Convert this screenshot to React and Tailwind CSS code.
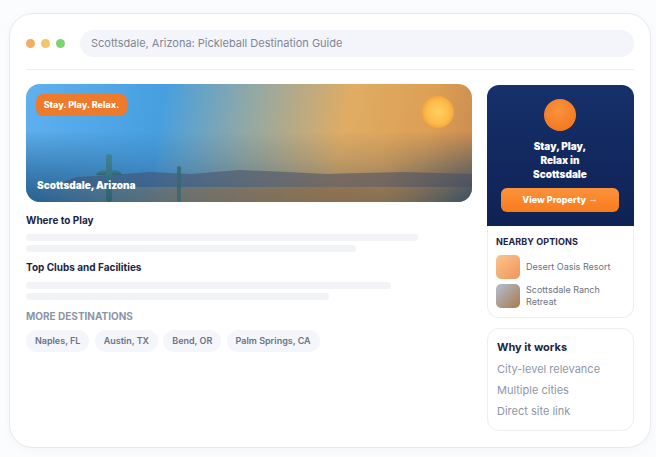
const font = { fontFamily: "Inter, 'Liberation Sans', sans-serif" };

function HeroArt() {
  return (
    <svg className="absolute inset-0 w-full h-full" viewBox="0 0 446 118" preserveAspectRatio="none">
      <defs>
        <linearGradient id="haze" x1="0" y1="0" x2="0" y2="1">
          <stop offset="0" stopColor="#1a3a66" stopOpacity="0" />
          <stop offset="0.4" stopColor="#1a3a66" stopOpacity="0" />
          <stop offset="0.62" stopColor="#1f4068" stopOpacity="0.14" />
          <stop offset="1" stopColor="#14375c" stopOpacity="0.45" />
        </linearGradient>
        <linearGradient id="edges" x1="0" y1="0" x2="1" y2="0">
          <stop offset="0" stopColor="#14507f" stopOpacity="0.55" />
          <stop offset="0.3" stopColor="#14507f" stopOpacity="0" />
          <stop offset="0.8" stopColor="#1d4a6e" stopOpacity="0" />
          <stop offset="1" stopColor="#1d4a6e" stopOpacity="0.7" />
        </linearGradient>
        <linearGradient id="fade" x1="0" y1="0" x2="0" y2="1">
          <stop offset="0.4" stopColor="#000" />
          <stop offset="1" stopColor="#fff" />
        </linearGradient>
        <mask id="bottomFade">
          <rect x="0" y="0" width="446" height="118" fill="url(#fade)" />
        </mask>
        <linearGradient id="hill" x1="0" y1="0" x2="0" y2="1">
          <stop offset="0" stopColor="#474c66" stopOpacity="0.55" />
          <stop offset="1" stopColor="#424a60" stopOpacity="0.45" />
        </linearGradient>
        <linearGradient id="ground" x1="0" y1="0" x2="1" y2="0">
          <stop offset="0" stopColor="#8a6a48" stopOpacity="0" />
          <stop offset="0.35" stopColor="#8a6a48" stopOpacity="0.55" />
          <stop offset="0.7" stopColor="#8a6a48" stopOpacity="0.65" />
          <stop offset="1" stopColor="#8a6a48" stopOpacity="0" />
        </linearGradient>
        <linearGradient id="trunk" x1="0" y1="0" x2="0" y2="1">
          <stop offset="0" stopColor="#3f7f8c" stopOpacity="0.85" />
          <stop offset="1" stopColor="#2c5f6a" stopOpacity="0.9" />
        </linearGradient>
        <radialGradient id="sun" cx="0.5" cy="0.5" r="0.5">
          <stop offset="0" stopColor="#ffd064" />
          <stop offset="0.72" stopColor="#fcbc48" />
          <stop offset="1" stopColor="#f6a63c" />
        </radialGradient>
      </defs>
      <rect x="0" y="0" width="446" height="118" fill="url(#haze)" />
      <rect x="0" y="0" width="446" height="118" fill="url(#edges)" mask="url(#bottomFade)" />
      <path d="M24 103 L50 93 L85 91 L123 88 L165 90 L213 86 L262 88 L300 90 L335 89 L379 88 L446 90 L446 103 Z" fill="url(#hill)" />
      <rect x="0" y="103" width="446" height="15" fill="url(#ground)" />
      <circle cx="412" cy="28" r="16" fill="url(#sun)" />
      <rect x="80" y="70" width="6" height="48" rx="3" fill="url(#trunk)" />
      <path d="M70 91 C72 86 77 85 80 87 L80 91 Z" fill="url(#trunk)" />
      <path d="M96 91 C94 86 89 85 86 87 L86 91 Z" fill="url(#trunk)" />
      <rect x="151" y="82" width="4" height="36" rx="2" fill="#3a6670" fillOpacity="0.85" />
    </svg>
  );
}

export default function App() {
  return (
    <div className="w-[656px] h-[457px] bg-[#fbfcfd] pt-[13px] pl-[9px] overflow-hidden" style={font}>
      <div className="w-[642px] h-[435px] bg-white border border-[#e8eaef] rounded-[24px] px-4 pt-4 shadow-[0_2px_10px_rgba(20,30,60,0.03)]">
        {/* Top bar */}
        <div className="flex items-center gap-[9px] h-[27px]">
          <div className="flex gap-[6px] w-[45px]">
            <span className="w-[9px] h-[9px] rounded-full bg-[#f4ad63]" />
            <span className="w-[9px] h-[9px] rounded-full bg-[#f3c566]" />
            <span className="w-[9px] h-[9px] rounded-full bg-[#7bd56f]" />
          </div>
          <div className="flex-1 h-[27px] rounded-full bg-[#f3f5fb] flex items-center pl-[11px] text-[11px] text-[#7f8695]">
            Scottsdale, Arizona: Pickleball Destination Guide
          </div>
        </div>
        <div className="h-px bg-[#edeff3] mt-3" />

        <div className="flex gap-[15px] mt-[14px]">
          {/* Left column */}
          <div className="w-[446px]">
            <div className="relative h-[118px] rounded-[14px] overflow-hidden bg-[linear-gradient(100deg,#5fb0ee_0%,#479fe0_30%,#8fa8a8_48%,#e0ac63_70%,#dc9f55_88%,#c98a4e_100%)]">
              <HeroArt />
              <div className="absolute left-[10px] top-[10px] h-[22px] w-[91px] rounded-[7px] bg-[#ee7a2c] flex items-center justify-center text-[9px] font-extrabold text-white">
                Stay. Play. Relax.
              </div>
              <div className="absolute left-[11px] bottom-[10px] text-[10px] leading-[14px] font-black text-white">
                Scottsdale, Arizona
              </div>
            </div>

            <h3 className="mt-[12px] text-[10px] leading-[13px] font-bold text-[#1c2544]">Where to Play</h3>
            <div className="mt-[7px] h-[7px] w-[392px] rounded-full bg-[#f1f3f7]" />
            <div className="mt-1 h-[7px] w-[330px] rounded-full bg-[#f1f3f7]" />

            <h3 className="mt-[9px] text-[10px] leading-[13px] font-bold text-[#1c2544]">Top Clubs and Facilities</h3>
            <div className="mt-2 h-[7px] w-[365px] rounded-full bg-[#f1f3f7]" />
            <div className="mt-1 h-[7px] w-[303px] rounded-full bg-[#f1f3f7]" />

            <div className="mt-[10px] text-[10px] leading-[13px] font-bold text-[#8d94a8]">MORE DESTINATIONS</div>
            <div className="flex gap-[5.4px] mt-[7px]">
              {["Naples, FL", "Austin, TX", "Bend, OR", "Palm Springs, CA"].map((c) => (
                <span key={c} className="h-[22px] px-[8.9px] rounded-full bg-[#f4f6fb] flex items-center text-[9px] font-semibold text-[#6b7385]">
                  {c}
                </span>
              ))}
            </div>
          </div>

          {/* Right column */}
          <div className="w-[147px] mt-px">
            <div className="h-[233px] flex flex-col">
              <div className="h-[141px] rounded-t-[12px] bg-[linear-gradient(180deg,#16306a,#0f2254)] flex flex-col items-center pt-[14px] pr-px">
                <div className="w-8 h-8 rounded-full bg-[radial-gradient(circle_at_45%_35%,#fb923c,#ef7118)]" />
                <div className="mt-2 text-center text-[10px] leading-[14px] font-black text-white w-[70px]">
                  Stay, Play, Relax in Scottsdale
                </div>
                <div className="mt-[7px] w-[118px] h-6 rounded-[6px] bg-[linear-gradient(180deg,#fb923c,#f97c1c)] flex items-center justify-center text-[9px] font-extrabold text-white">
                  View Property <span className="ml-[2.5px]" style={{ fontFamily: "'Liberation Sans', sans-serif" }}>→</span>
                </div>
              </div>
              <div className="flex-1 border-x border-b border-[#eceef2] rounded-b-[12px] px-2 pt-[10px]">
                <div className="text-[9px] leading-[11px] font-bold text-[#1c2544] tracking-[0.01em]">NEARBY OPTIONS</div>
                <div className="flex items-center gap-[6px] mt-2">
                  <div className="w-6 h-6 rounded-[5px] bg-[linear-gradient(135deg,#fbc48e,#ef955a)]" />
                  <span className="text-[9px] leading-3 text-[#6b7280]">Desert Oasis Resort</span>
                </div>
                <div className="flex items-center gap-[6px] mt-[5px]">
                  <div className="w-6 h-6 rounded-[5px] bg-[linear-gradient(135deg,#b3bfd4,#a97a4a)]" />
                  <span className="text-[9px] leading-3 text-[#6b7280] w-[90px]">Scottsdale Ranch Retreat</span>
                </div>
              </div>
            </div>

            <div className="mt-[10px] h-[103px] rounded-[12px] border border-[#eceef2] bg-white px-[9px] pt-[11px]">
              <div className="text-[11px] leading-[15px] font-bold text-[#1c2544]">Why it works</div>
              <div className="mt-1 text-[11px] leading-[21px] text-[#8f96a8]">City-level relevance</div>
              <div className="text-[11px] leading-[21px] text-[#8f96a8]">Multiple cities</div>
              <div className="text-[11px] leading-[21px] text-[#8f96a8]">Direct site link</div>
            </div>
          </div>
        </div>
      </div>
    </div>
  );
}
